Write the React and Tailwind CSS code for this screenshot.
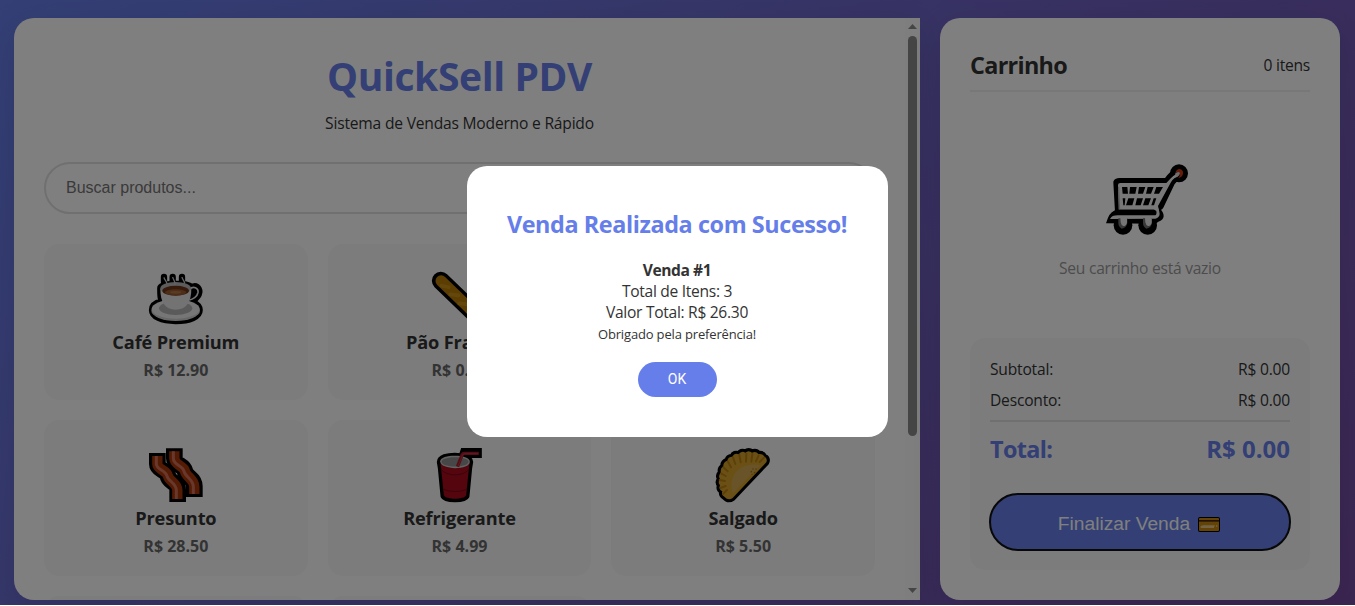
const out = "#000";

function Coffee() {
  return (
    <svg viewBox="12 12 192 192" className="size-16">
      <g fill={out} stroke={out} strokeWidth="19" strokeLinejoin="round" strokeLinecap="round">
        <path d="M72 51v14M98 51v16M126 51v16" fill="none" />
        <path d="M61 84C61 68 150 68 154 82C168 74 178 82 178 96C176 112 164 118 155 124C166 129 179 138 179 150C179 170 150 183 107 183C64 183 36 170 36 150C36 136 48 128 65 124C60 112 61 98 61 84Z" />
      </g>
      <ellipse cx="107" cy="152" rx="73" ry="31" fill="#cfcfcf" />
      <ellipse cx="107" cy="147" rx="72" ry="29" fill="#ededed" />
      <ellipse cx="107" cy="145" rx="50" ry="20" fill="#b4b4b4" />
      <path d="M148 88C160 76 176 84 174 98C172 110 158 118 148 120" fill="none" stroke="#e4e4e4" strokeWidth="5" />
      <path d="M61 86C61 124 74 149 107 149C140 149 154 124 154 86Z" fill="#e6e6e6" />
      <ellipse cx="107" cy="85" rx="46" ry="19" fill="#b8b8b8" />
      <ellipse cx="107" cy="92" rx="40" ry="15" fill="#6e3517" />
      <ellipse cx="107" cy="97" rx="32" ry="9" fill="#9a5c32" />
      <ellipse cx="107" cy="97" rx="17" ry="4" fill="#b57844" />
      <path d="M72 52c1 8 7 9 9 20M98 51c1 8 9 12 7 24M126 51c1 8 7 10 8 20" fill="none" stroke="#c9c9c9" strokeWidth="4" />
    </svg>
  );
}

function Baguette() {
  return (
    <svg viewBox="22.5 12 192 192" className="size-16">
      <path d="M64 62L176 170" stroke={out} strokeWidth="54" strokeLinecap="round" />
      <path d="M65 63L174 168" stroke="#b87a05" strokeWidth="34" strokeLinecap="round" />
      <path d="M66 77l22 5M92 103l25 3M119 130l25 3M144 155l25 3" stroke="#c98f17" strokeWidth="11" strokeLinecap="round" />
    </svg>
  );
}

function Bacon() {
  const left = "M52 48V72C52 89 80 90 84 108C87 124 112 129 112 151V177";
  const right = "M103 34V55C103 76 131 76 135 94C139 111 163 118 163 140V162";
  return (
    <svg viewBox="12 0 192 192" className="size-16" fill="none">
      <g stroke={out} strokeWidth="50">
        <path d="M52 39V72C52 90 80 90 84 108C86 126 114 126 113 148V186" />
        <path d="M103 25V55C103 76 131 74 135 94C140 114 163 114 163 138V171" />
      </g>
      <g stroke="#a93608" strokeWidth="31">
        <path d={left} />
        <path d={right} />
      </g>
      <g stroke="#d0705a" strokeWidth="9">
        <path d={left} transform="translate(-3 0)" />
        <path d={right} transform="translate(-3 0)" />
      </g>
    </svg>
  );
}

function Soda() {
  return (
    <svg viewBox="7.5 0 192 192" className="size-16">
      <g fill={out} stroke={out} strokeWidth="20" strokeLinejoin="round">
        <path d="M47 66C47 42 134 42 136 66L133 84L125 168C120 180 63 180 58 168L50 84Z" />
      </g>
      <path d="M98 60L110 24H172V54H124L118 70Z" fill={out} />
      <path d="M48 68L58 166C63 180 120 180 125 166L135 68Z" fill="#a80a1c" />
      <path d="M50 88C65 110 119 110 133 88M56 147C75 157 110 157 127 147" stroke="#7b0614" strokeWidth="3" fill="none" />
      <path d="M47 64C47 42 136 42 136 65C136 91 47 91 47 64Z" fill="#c4c4c4" />
      <path d="M51 65C51 47 132 47 132 65C132 84 51 84 51 65Z" fill="#8e8e8e" />
      <path d="M99 80L113 44Q115 40 120 40H163" fill="none" stroke="#a51c2b" strokeWidth="10" />
      <path d="M101 78L114 46Q116 41 121 41H160" fill="none" stroke="#c94451" strokeWidth="2" />
    </svg>
  );
}

const crust = "M58 170Q48 164 52 154Q40 148 45 136Q37 127 45 117Q38 106 48 98Q44 86 55 79Q54 66 67 62Q69 50 82 50Q88 37 101 43Q109 31 121 38Q131 29 141 38Q153 32 160 42Q173 40 177 49Q189 56 184 67L83 174Q70 183 58 170Z";

function Pastry() {
  return (
    <svg viewBox="18 0 192 192" className="size-16">
      <path d={crust} stroke={out} strokeWidth="18" strokeLinejoin="round" fill={out} />
      <path d={crust} fill="#d6a02a" />
      <path d="M66 150l-12 12M62 138l-16 6M60 123l-16-3M62 108l-14-8M68 94l-13-12M78 82l-9-17M91 72l-7-20M107 67l-4-22M123 65l1-24M139 65l3-23M153 64l8-18M164 66l13-13" stroke="#b98011" strokeWidth="6" strokeLinecap="round" />
      <path d="M84 160C66 118 98 62 166 76Z" fill="#d3a954" />
      <g fill="#b06f0b">
        <circle cx="144" cy="87" r="2.5" /><circle cx="153" cy="87" r="2.5" />
        <circle cx="139" cy="95" r="2.5" /><circle cx="149" cy="98" r="2.5" /><circle cx="141" cy="103" r="2" />
      </g>
    </svg>
  );
}

function Cart() {
  return (
    <svg viewBox="-9 -9 288 288" className="size-24" fill="none" strokeLinejoin="round">
      <circle cx="252" cy="55" r="27" fill={out} />
      <path d="M250 55Q236 62 224 79L190 150" stroke={out} strokeWidth="34" strokeLinecap="round" />
      <path d="M64 82Q65 78 74 78H214L180 170H69Z" stroke={out} strokeWidth="18" fill={out} />
      <path d="M33 205L39 188Q47 170 66 163H196Q206 172 206 184Q205 196 190 200L182 206Z" fill={out} />
      <circle cx="84" cy="211" r="28" fill={out} />
      <circle cx="158" cy="211" r="28" fill={out} />
      <path d="M69 90Q69 84 76 84H214Q224 73 234 64Q242 55 254 53Q252 63 238 70Q231 75 227 83L189 153L193 172L177 164H71Z" fill="#f0f0f0" />
      <path d="M71 96L74 162" stroke="#b5b5b5" strokeWidth="3" />
      <g fill={out}>
        <path d="M81 96h16l2 20H83zM105 96h20l-4 20h-18zM132 96h19l-7 20h-15zM158 96h18l-8 20h-15zM184 96h20l-12 20h-15z" />
        <path d="M83 130h8l-2 21H85zM100 130h18l-6 21H93zM126 130h18l-7 21h-16zM151 130h17l-8 21h-16zM176 130h8l-7 21h-8z" />
      </g>
      <path d="M66 170H178" stroke={out} strokeWidth="12" />
      <path d="M45 192C49 184 56 181 68 181H180Q186 180 184 168L190 160L194 176Q194 187 181 191Z" fill="#ededed" />
      <path d="M70 190H97V204Q94 219 80 221Q70 215 70 204Z" fill="#707070" />
      <path d="M144 190H171V204Q168 219 154 221Q144 215 144 204Z" fill="#707070" />
      <path d="M76 189H96V203Q93 213 85 213Q78 210 77 202ZM150 189H170V203Q167 213 159 213Q152 210 151 202Z" fill="#ededed" />
      <path d="M241 54Q244 42 254 42Q265 44 264 56Q261 67 250 69Q259 58 253 52Q249 49 241 54Z" fill="#d13a12" />
      <path d="M240 56Q248 48 255 53Q256 60 246 67Z" fill="#e7d8d4" />
    </svg>
  );
}

function Card() {
  return (
    <svg viewBox="0 0 66 45" className="h-[15px] w-[22px]">
      <rect width="66" height="45" rx="6" fill={out} />
      <rect x="3" y="3" width="60" height="39" rx="3" fill="#c8860c" />
      <path d="M3 9h60v5H3z" fill="#45250a" />
      <path d="M8 29l8-2h34M8 31h40M54 27h4" stroke="#e6c78b" strokeWidth="4" fill="none" />
    </svg>
  );
}

const products = [
  { name: "Café Premium", price: "R$ 12.90", Icon: Coffee },
  { name: "Pão Francês", price: "R$ 0.75", Icon: Baguette },
  null,
  { name: "Presunto", price: "R$ 28.50", Icon: Bacon },
  { name: "Refrigerante", price: "R$ 4.99", Icon: Soda },
  { name: "Salgado", price: "R$ 5.50", Icon: Pastry },
  null,
  null,
];

function Product({ name, price, Icon }) {
  return (
    <div className="flex h-[156px] flex-col items-center rounded-[15px] bg-[#f8f9fa] pt-5">
      <Icon />
      <h3 className="mt-0.5 text-[18.2px] leading-6 font-bold tracking-[-0.15px]">{name}</h3>
      <p className="mt-[5px] text-[16px] leading-[22px] font-bold text-[#666]">{price}</p>
    </div>
  );
}

function Arrow({ down }) {
  return (
    <svg viewBox="0 0 9 5" className="h-[5px] w-[9px]">
      <path d={down ? "M0 0H9L4.5 5Z" : "M0 5H9L4.5 0Z"} fill="#8b8b8b" />
    </svg>
  );
}

export default function App() {
  return (
    <div className="h-[606px] w-[1355px] overflow-hidden bg-white font-['Open_Sans',sans-serif] text-[15.6px] text-[#333]">
      <div className="flex h-[605px] gap-5 overflow-hidden bg-[linear-gradient(135deg,#667eea_0%,#764ba2_100%)] pt-[18px] pl-[14px]">
        <main className="flex h-[582px] w-[906px] overflow-hidden rounded-l-[20px] bg-white shadow-[0_10px_30px_rgba(0,0,0,0.1)]">
          <div className="flex w-[891px] flex-col px-[30px] pt-[30px]">
            <h1 className="h-[58px] shrink-0 text-center text-[39px] leading-[55px] font-bold tracking-[-0.38px] text-[#667eea]">QuickSell PDV</h1>
            <p className="mt-[6px] shrink-0 text-center leading-[22px] tracking-[-0.2px]">Sistema de Vendas Moderno e Rápido</p>
            <div className="mt-[28px] flex h-[52px] shrink-0 items-center rounded-[26px] border-2 border-[#e0e0e0] px-5 font-['Liberation_Sans',sans-serif] text-[16px] text-[#757575]">
              Buscar produtos...
            </div>
            <div className="mt-[30px] grid grid-cols-3 gap-5">
              {products.map((p, i) =>
                p ? <Product key={i} {...p} /> : <div key={i} className="h-[156px] rounded-[15px] bg-[#f8f9fa]" />
              )}
            </div>
          </div>
          <div className="flex w-[15px] flex-col items-center bg-[#fcfcfc] pt-[6px] pb-[7px]">
            <Arrow />
            <div className="mt-[7px] h-[400px] w-[9px] rounded-full bg-[#8b8b8b]" />
            <div className="mt-auto flex"><Arrow down /></div>
          </div>
        </main>
        <aside className="flex h-[582px] w-[400px] flex-col rounded-[20px] bg-white p-[30px] shadow-[0_10px_30px_rgba(0,0,0,0.1)]">
          <div className="flex h-11 items-start justify-between border-b-2 border-[#f0f0f0]">
            <h2 className="text-[23.4px] leading-[35px] font-bold tracking-[-0.7px]">Carrinho</h2>
            <span className="leading-[34px] tracking-[-0.25px]">0 itens</span>
          </div>
          <div className="flex h-[246px] flex-col items-center pt-[60px] text-[#999]">
            <Cart />
            <p className="mt-[9px] leading-[22px] tracking-[-0.26px]">Seu carrinho está vazio</p>
          </div>
          <div className="h-[232px] rounded-[15px] bg-[#f8f9fa] px-5 pt-5 tracking-[-0.2px]">
            <div className="flex justify-between leading-[22px]"><span>Subtotal:</span><span>R$ 0.00</span></div>
            <div className="mt-[9px] flex justify-between leading-[22px]"><span>Desconto:</span><span>R$ 0.00</span></div>
            <div className="mt-[9px] flex justify-between border-t-2 border-[#e0e0e0] pt-[11px] text-[24px] leading-8 font-bold text-[#667eea]">
              <span className="text-[23.4px] tracking-[-0.65px]">Total:</span><span className="tracking-[0px]">R$ 0.00</span>
            </div>
            <button className="mt-[29px] flex h-[56px] w-full items-center justify-center gap-2 rounded-full bg-[#667eea] pt-[4px] pr-[2px] font-['Liberation_Sans',sans-serif] text-[19.2px] tracking-normal text-white outline-2 -outline-offset-1 outline-[#101010]">
              Finalizar Venda <Card />
            </button>
          </div>
        </aside>
      </div>
      <div className="fixed top-0 left-0 flex h-[605px] w-[1355px] items-center justify-center bg-black/50">
        <div className="mr-px mb-[2px] flex h-[271px] w-[421px] flex-col items-center rounded-[20px] bg-white pt-[39.5px] text-center">
          <h2 className="text-[23.4px] leading-9 font-bold tracking-[-0.41px] text-[#667eea]">Venda Realizada com Sucesso!</h2>
          <p className="mt-[18px] leading-[21px] font-bold tracking-[-0.45px]">Venda #1</p>
          <p className="leading-[21px] tracking-[-0.3px]">Total de Itens: 3</p>
          <p className="leading-[21px] tracking-[-0.3px]">Valor Total: R$ 26.30</p>
          <p className="text-[13px] leading-[22px] tracking-[-0.16px]">Obrigado pela preferência!</p>
          <button className="mt-[17.5px] h-[35px] w-[79px] rounded-full bg-[#667eea] font-['Roboto',sans-serif] text-[14px] text-white">OK</button>
        </div>
      </div>
    </div>
  );
}
